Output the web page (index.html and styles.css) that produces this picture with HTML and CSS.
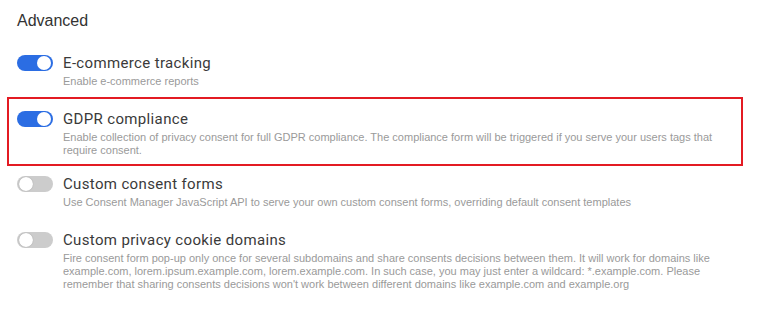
FILE: index.html
```html
<!DOCTYPE html>
<html lang="en">
<head>
<meta charset="utf-8">
<title>Advanced</title>
<link rel="stylesheet" href="styles.css">
</head>
<body>
<div class="panel">
  <h2 class="heading">Advanced</h2>
  <div class="row row-first">
    <span class="switch on"><span class="knob"></span></span>
    <div class="text">
      <div class="title">E-commerce tracking</div>
      <div class="desc">Enable e-commerce reports</div>
    </div>
  </div>
  <div class="row row-highlight">
    <span class="switch on"><span class="knob"></span></span>
    <div class="text">
      <div class="title">GDPR compliance</div>
      <div class="desc">Enable collection of privacy consent for full GDPR compliance. The compliance form will be triggered if you serve your users tags that require consent.</div>
    </div>
  </div>
  <div class="row row-after">
    <span class="switch"><span class="knob"></span></span>
    <div class="text">
      <div class="title">Custom consent forms</div>
      <div class="desc">Use Consent Manager JavaScript API to serve your own custom consent forms, overriding default consent templates</div>
    </div>
  </div>
  <div class="row row-last">
    <span class="switch"><span class="knob"></span></span>
    <div class="text">
      <div class="title">Custom privacy cookie domains</div>
      <div class="desc">Fire consent form pop-up only once for several subdomains and share consents decisions between them. It will work for domains like example.com, lorem.ipsum.example.com, lorem.example.com. In such case, you may just enter a wildcard: *.example.com. Please remember that sharing consents decisions won't work between different domains like example.com and example.org</div>
    </div>
  </div>
</div>
</body>
</html>
```

FILE: styles.css
```css
html, body {
  margin: 0;
  padding: 0;
  background: #ffffff;
}

.panel {
  padding: 12px 0 0 17px;
  width: 716px;
  font-family: "Liberation Sans", Arial, sans-serif;
}

.heading {
  margin: 0;
  font-family: "Liberation Sans", Arial, sans-serif;
  font-weight: normal;
  font-size: 16px;
  line-height: 18px;
  color: #333333;
}

.row {
  display: flex;
  align-items: flex-start;
  gap: 10px;
}

.row-first {
  margin-top: 24px;
}

.row-highlight {
  margin: 9px -10px 0 -10px;
  border: 2px solid #e31b23;
  padding: 11px 8px 7px 8px;
}

.row-after {
  margin-top: 9px;
}

.row-last {
  margin-top: 22px;
}

.switch {
  flex: none;
  position: relative;
  width: 36px;
  height: 16px;
  margin-top: 1px;
  border-radius: 8px;
  background: #cccccc;
}

.switch.on {
  background: #2b6de3;
}

.knob {
  position: absolute;
  top: 1px;
  left: 2px;
  width: 14px;
  height: 14px;
  border-radius: 50%;
  background: #ffffff;
  box-shadow: 0 0 1px rgba(0, 0, 0, 0.35);
}

.switch.on .knob {
  left: auto;
  right: 2px;
  box-shadow: none;
}

.text {
  flex: 1;
  min-width: 0;
}

.title {
  font-family: Roboto, "Liberation Sans", sans-serif;
  font-size: 15px;
  line-height: 18px;
  letter-spacing: 0.35px;
  color: #3a3a3a;
}

.desc {
  margin-top: 3px;
  font-family: "Liberation Sans", Arial, sans-serif;
  font-size: 11px;
  line-height: 13px;
  color: #9a9a9a;
}
```
